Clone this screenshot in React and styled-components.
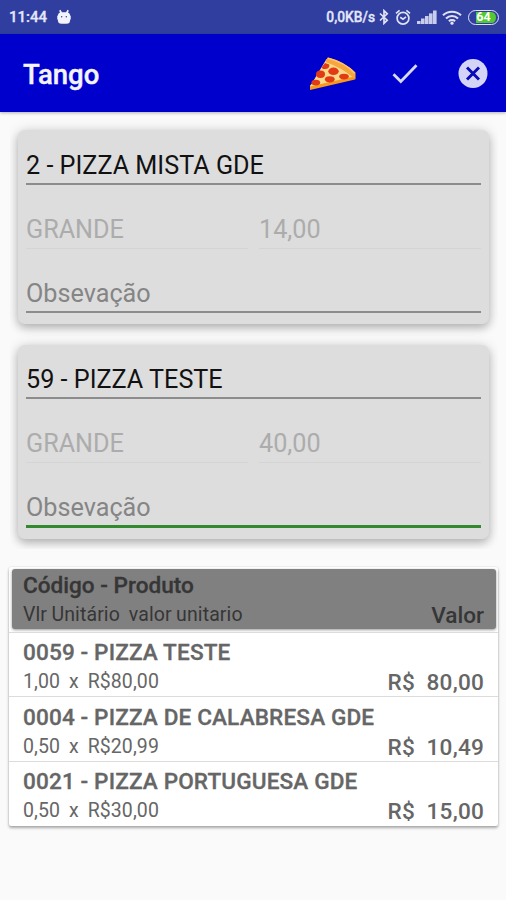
import React from 'react';
import styled, { createGlobalStyle } from 'styled-components';

const GlobalStyle = createGlobalStyle`
  * {
    box-sizing: border-box;
  }
  body {
    margin: 0;
    background: #fafafa;
    font-family: Roboto, 'Liberation Sans', sans-serif;
  }
`;

const Screen = styled.div`
  width: 506px;
  height: 900px;
  overflow: hidden;
  background: #fafafa;
`;

const StatusBar = styled.div`
  display: flex;
  align-items: center;
  justify-content: space-between;
  height: 34px;
  padding: 0 7px 0 9px;
  background: #303f9f;
  color: #e4e7fa;
`;

const StatusGroup = styled.div`
  display: flex;
  align-items: center;

  svg {
    display: block;
  }
`;

const Clock = styled.span`
  margin-right: 10px;
  font-size: 15px;
  font-weight: 500;
  line-height: 34px;
  -webkit-text-stroke: 0.3px;
`;

const Speed = styled.span`
  margin-right: 4px;
  font-size: 13.8px;
  font-weight: 500;
  line-height: 34px;
  -webkit-text-stroke: 0.3px;
`;

const StatusIcon = styled.span`
  margin-right: ${(props) => props.$gap}px;
`;

const Battery = styled.div`
  display: flex;
  align-items: center;
  justify-content: center;
  width: 31px;
  height: 15px;
  padding: 1px 2px;
  border: 1.5px solid #dfe2f5;
  border-radius: 8px;
  background: linear-gradient(90deg, #303f9f 0 20%, #52c832 20%) content-box;
  color: #fff;
  font-size: 12.5px;
  font-weight: 700;
  line-height: 12px;
`;

const Toolbar = styled.header`
  display: flex;
  align-items: center;
  height: 78px;
  padding: 0 18px 0 23px;
  background: #0000cd;
  box-shadow: 0 1px 3px rgba(0, 0, 0, 0.3);
`;

const Title = styled.h1`
  flex: 1;
  margin: 0;
  padding-top: 4px;
  color: #f4f4ff;
  font-size: 27.5px;
  font-weight: 500;
  line-height: 34px;
  -webkit-text-stroke: 0.4px;
`;

const Action = styled.button`
  display: flex;
  padding: 2px 0 0;
  margin-left: ${(props) => props.$gap || 0}px;
  border: none;
  background: none;
`;

const Orders = styled.section`
  height: 437px;
  padding: 18px 9px 0 8px;
  margin: 0 8px 0 10px;
  overflow: hidden;
`;

const Card = styled.div`
  height: 194px;
  padding: 20px 8px 0;
  border-radius: 7px;
  background: #ddd;
  box-shadow: 0 4px 8px rgba(0, 0, 0, 0.22), 0 1px 14px rgba(0, 0, 0, 0.14);

  & + & {
    margin-top: 21px;
    padding-top: 19px;
  }
`;

const FieldRow = styled.div`
  display: flex;
  gap: 11px;
  margin: 28px 0;
`;

const tones = {
  value: { color: '#111', line: '#8c8c8c' },
  hint: { color: '#858585', line: '#8c8c8c' },
  disabled: { color: '#acacac', line: '#d4d4d4' },
  focused: { color: '#858585', line: '#338a2e' },
};

const Field = styled.div`
  flex: 1;
  height: 36px;
  color: ${(props) => tones[props.$tone].color};
  font-size: 25.2px;
  line-height: 32px;
  white-space: pre;

  &::after {
    content: '';
    display: block;
    height: ${(props) => (props.$tone === 'focused' ? 3 : props.$tone === 'disabled' ? 1 : 2)}px;
    margin-top: ${(props) => (props.$tone === 'disabled' ? 2 : 1)}px;
    background: ${(props) => tones[props.$tone].line};
  }
`;

const List = styled.section`
  width: 489px;
  margin: 18px 0 0 9px;
  padding-bottom: 1px;
  border-radius: 2px;
  background: #fff;
  box-shadow: 0 2px 3px rgba(0, 0, 0, 0.32), 0 0 2px rgba(0, 0, 0, 0.14);
`;

const Row = styled.div`
  display: flex;
  align-items: flex-end;
  justify-content: space-between;
  height: 64.3px;
  padding: 0 14px;
  border-top: 1px solid #dcdcdc;
  color: #666;
`;

const HeaderWrap = styled.div`
  height: 65px;
  padding: 2px 2px 0 3px;
`;

const HeaderRow = styled(Row)`
  height: 60px;
  padding: 0 12px 0 11px;
  border: none;
  border-radius: 3px;
  background: #808080;
  box-shadow: 0 1px 3px rgba(0, 0, 0, 0.4);
  color: #363636;
`;

const Name = styled.div`
  font-size: 22.6px;
  font-weight: 500;
  line-height: 28px;
  letter-spacing: ${(props) => props.$spacing || 0}px;
  white-space: pre;
  -webkit-text-stroke: 0.3px;
`;

const Detail = styled.div`
  font-size: 19.5px;
  line-height: 29px;
  letter-spacing: 0.1px;
  word-spacing: -0.5px;
  white-space: pre;
`;

const Amount = styled.div`
  margin-bottom: -1px;
  font-size: 22.6px;
  font-weight: 500;
  line-height: 28px;
  letter-spacing: ${(props) => props.$spacing || 0}px;
  white-space: pre;
`;

const pizzas = [
  { name: '2 - PIZZA MISTA GDE', size: 'GRANDE', price: '14,00' },
  { name: '59 - PIZZA TESTE', size: 'GRANDE', price: '40,00', focused: true },
];

const items = [
  { name: '0059 - PIZZA TESTE', detail: '1,00  x  R$80,00', amount: 'R$  80,00' },
  { name: '0004 - PIZZA DE CALABRESA GDE', detail: '0,50  x  R$20,99', amount: 'R$  10,49' },
  { name: '0021 - PIZZA PORTUGUESA GDE', detail: '0,50  x  R$30,00', amount: 'R$  15,00' },
];

function DroidIcon() {
  return (
    <svg width="14" height="16" viewBox="0 0 15 16">
      <path d="M3 .8l1.8 3.2M12 .8l-1.8 3.2" stroke="#f2f3fd" strokeWidth="1.8" />
      <rect x="1" y="2.8" width="13" height="12.4" rx="3.8" fill="#f2f3fd" />
      <rect x="0.3" y="6" width="14.4" height="5.5" rx="1.5" fill="#f2f3fd" />
      <circle cx="5" cy="7.8" r="0.8" fill="#303f9f" />
      <circle cx="10" cy="7.8" r="0.8" fill="#303f9f" />
    </svg>
  );
}

function BluetoothIcon() {
  return (
    <svg width="10" height="16" viewBox="0 0 10 16" fill="none" stroke="#dfe2f5" strokeWidth="1.7">
      <path d="M1 4.5l7.2 6.7L5 14.3V1.7l3.2 3.1L1 11.5" />
    </svg>
  );
}

function AlarmIcon() {
  return (
    <svg width="16" height="17" viewBox="0 0 16 17" fill="none" stroke="#dfe2f5" strokeWidth="1.7">
      <circle cx="8" cy="9.3" r="5.9" />
      <path d="M1 4.3l3.6-2.9M15 4.3l-3.6-2.9M5.2 8.2L8 10.2l3-2.3" />
    </svg>
  );
}

function SignalIcon() {
  return (
    <svg width="20" height="14" viewBox="0 0 20 14" fill="#c9cdec">
      <rect x="0" y="11" width="3.6" height="3" />
      <rect x="4" y="8.5" width="3.6" height="5.5" />
      <rect x="8" y="6" width="3.6" height="8" />
      <rect x="12" y="3.4" width="3.6" height="10.6" />
      <rect x="16" y="0.5" width="3.6" height="13.5" />
    </svg>
  );
}

function WifiIcon() {
  return (
    <svg width="20" height="15" viewBox="0 0 20 15" fill="none" stroke="#dfe2f5" strokeWidth="2.1">
      <path d="M1 5.3a13 13 0 0 1 18 0M4 8.5a8.6 8.6 0 0 1 12 0M6.9 11.3a4.6 4.6 0 0 1 6.2 0" />
      <circle cx="10" cy="13.2" r="1.6" fill="#dfe2f5" stroke="none" />
    </svg>
  );
}

function PizzaIcon() {
  return (
    <svg width="48" height="34" viewBox="0 0 48 34">
      <path d="M1 28L44 17l2 5.5L1 33z" fill="#f79a1c" />
      <path d="M17.5 2L45 19.5 1 29.500z" fill="#fbd98a" />
      <path d="M18.500.5C29 3 41 9.500 46.500 15.500v7C38 14.800 29 9.500 16.500 5z" fill="#f8a63b" />
      <path d="M19 1.300c10.500 2.500 20.500 8 26.500 15" stroke="#ffc568" strokeWidth="1.4" fill="none" />
      <g fill="#e23a16">
        <path d="M16 6l4.200 1.400c.6 3-1.400 5-6.200 4.600l-1.400-1.500z" />
        <ellipse cx="24.5" cy="14.300" rx="5.200" ry="3.700" />
        <ellipse cx="11.500" cy="17.300" rx="4.500" ry="3.700" />
        <ellipse cx="20.800" cy="22.300" rx="4.900" ry="3.100" />
        <ellipse cx="35" cy="19.600" rx="4.800" ry="2.800" />
        <ellipse cx="6.800" cy="25.600" rx="4.400" ry="2.900" />
      </g>
    </svg>
  );
}

function CheckIcon() {
  return (
    <svg width="28" height="24" viewBox="0 0 28 24" fill="none" stroke="#d8d8f8" strokeWidth="2.8">
      <path d="M2.5 12.2l7.300 7.300L25.500 3.200" />
    </svg>
  );
}

function CloseIcon() {
  return (
    <svg width="30" height="30" viewBox="0 0 30 30">
      <circle cx="15" cy="14.500" r="14.500" fill="#d4d4f7" />
      <path d="M9 8.500l12 12M21 8.500l-12 12" stroke="#0a0ab8" strokeWidth="2.9" />
    </svg>
  );
}

function App() {
  return (
    <Screen>
      <GlobalStyle />
      <StatusBar>
        <StatusGroup>
          <Clock>11:44</Clock>
          <DroidIcon />
        </StatusGroup>
        <StatusGroup>
          <Speed>0,0KB/s</Speed>
          <StatusIcon $gap={6}>
            <BluetoothIcon />
          </StatusIcon>
          <StatusIcon $gap={6}>
            <AlarmIcon />
          </StatusIcon>
          <StatusIcon $gap={5}>
            <SignalIcon />
          </StatusIcon>
          <StatusIcon $gap={6}>
            <WifiIcon />
          </StatusIcon>
          <Battery>64</Battery>
        </StatusGroup>
      </StatusBar>
      <Toolbar>
        <Title>Tango</Title>
        <Action aria-label="Pizza">
          <PizzaIcon />
        </Action>
        <Action aria-label="Confirmar" $gap={34}>
          <CheckIcon />
        </Action>
        <Action aria-label="Fechar" $gap={39}>
          <CloseIcon />
        </Action>
      </Toolbar>
      <Orders>
        {pizzas.map((pizza) => (
          <Card key={pizza.name}>
            <Field $tone="value">{pizza.name}</Field>
            <FieldRow>
              <Field $tone="disabled">{pizza.size}</Field>
              <Field $tone="disabled">{pizza.price}</Field>
            </FieldRow>
            <Field $tone={pizza.focused ? 'focused' : 'hint'}>Obsevação</Field>
          </Card>
        ))}
      </Orders>
      <List>
        <HeaderWrap>
          <HeaderRow>
            <div>
              <Name>Código - Produto</Name>
              <Detail>Vlr Unitário  valor unitario</Detail>
            </div>
            <Amount>Valor</Amount>
          </HeaderRow>
        </HeaderWrap>
        {items.map((item) => (
          <Row key={item.name}>
            <div>
              <Name $spacing={0.12}>{item.name}</Name>
              <Detail>{item.detail}</Detail>
            </div>
            <Amount $spacing={0.2}>{item.amount}</Amount>
          </Row>
        ))}
      </List>
    </Screen>
  );
}

export default App;
